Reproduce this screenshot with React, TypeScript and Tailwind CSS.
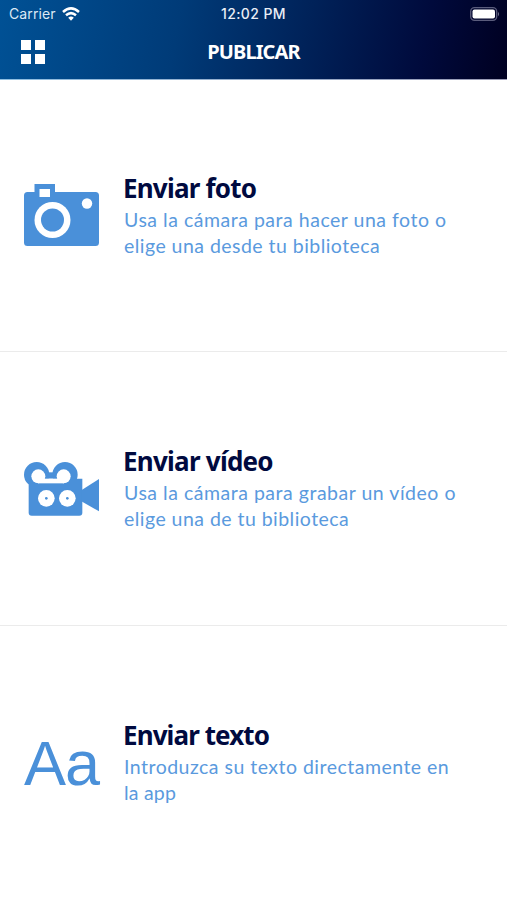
import React from "react";

function CameraIcon() {
  return (
    <svg width="75" height="62" viewBox="0 0 75 62" fill="#4a90d9">
      <path d="M10.5 8V0H31V8H71.500Q75 8 75 11.500V58.500Q75 62 71.500 62H3.500Q0 62 0 58.500V11.500Q0 8 3.500 8Z" />
      <rect x="15.500" y="5" width="10.500" height="8" fill="white" />
      <circle cx="28.500" cy="36" r="18" fill="white" />
      <circle cx="28.500" cy="36" r="11.500" />
      <circle cx="63" cy="19.500" r="5.200" fill="white" />
    </svg>
  );
}

function VideoIcon() {
  return (
    <svg width="75" height="54" viewBox="42 35 225 162" fill="#4a90d9">
      <circle cx="80" cy="73" r="38" />
      <circle cx="165" cy="73" r="38" />
      <path d="M56 85H217V187Q217 196 208 196H65Q56 196 56 187Z" />
      <path d="M214 120L267 86V183L214 153Z" />
      <path d="M105 66H140V85H105Z" />
      <g fill="white">
        <circle cx="85" cy="78" r="21" />
        <circle cx="161" cy="78" r="21" />
        <rect x="84" y="85" width="78" height="14" />
        <circle cx="109" cy="144" r="25" />
        <circle cx="172" cy="144" r="25" />
      </g>
      <circle cx="109" cy="144" r="4" />
      <circle cx="172" cy="144" r="4" />
    </svg>
  );
}

function TextIcon() {
  return (
    <span className="block font-['Liberation_Sans',sans-serif] text-[63px] leading-[64px] tracking-[-1px] text-[#4a90d9]">
      Aa
    </span>
  );
}

const OPTIONS = [
  {
    icon: <CameraIcon />,
    title: "Enviar foto",
    height: "h-[273px]",
    titleClass: "tracking-[-0.8px]",
    lines: [
      { text: "Usa la cámara para hacer una foto o", className: "tracking-[0.520px]" },
      { text: "elige una desde tu biblioteca", className: "tracking-[0.460px]" },
    ],
  },
  {
    icon: <VideoIcon />,
    title: "Enviar vídeo",
    height: "h-[274px]",
    titleClass: "tracking-[-0.750px]",
    lines: [
      { text: "Usa la cámara para grabar un vídeo o", className: "tracking-[0.520px]" },
      { text: "elige una de tu biblioteca", className: "tracking-[0.460px]" },
    ],
  },
  {
    icon: <TextIcon />,
    title: "Enviar texto",
    height: "h-[273px]",
    titleClass: "tracking-[-0.9px]",
    lines: [
      { text: "Introduzca su texto directamente en", className: "tracking-[0.480px]" },
      { text: "la app", className: "tracking-[0.2px]" },
    ],
  },
];

function StatusBar() {
  return (
    <div className="grid h-[27px] grid-cols-3 items-center pr-[7px] pl-[9px] font-[Inter,sans-serif] text-[14px]">
      <div className="flex items-center gap-[6px]">
        <span className="tracking-[0.1px] text-[#dce9f5]">Carrier</span>
        <svg width="18" height="14" viewBox="0 0 18 14" fill="none" stroke="white" strokeWidth="2.500">
          <path d="M1 5Q9 -2.200 17 5" />
          <path d="M4 8.300Q9 4 14 8.300" />
          <path d="M6.200 10.700Q9 8.300 11.800 10.700L9 13.800Z" fill="white" stroke="none" />
        </svg>
      </div>
      <span className="-ml-0.5 text-center font-medium tracking-[0.4px] whitespace-nowrap text-[#e9eef6]">
        12:02 PM
      </span>
      <svg className="justify-self-end" width="30" height="14" viewBox="0 0 30 14">
        <rect x="0.700" y="0.700" width="26" height="12.600" rx="3.800" fill="none" stroke="#5a5c7c" strokeWidth="1.300" />
        <rect x="2.500" y="2.500" width="22.500" height="9" rx="2" fill="white" />
        <path d="M28 4.700Q30 7 28 9.300Z" fill="#74758f" />
      </svg>
    </div>
  );
}

export default function App() {
  return (
    <div className="flex h-[900px] w-[507px] flex-col overflow-hidden bg-white">
      <header className="h-[79px] shrink-0 bg-[linear-gradient(100deg,#005195_0%,#003b78_35%,#002259_60%,#000a3c_83%,#000021_100%)] text-white">
        <StatusBar />
        <div className="grid h-[50px] grid-cols-3 items-center px-[21px]">
          <div className="grid w-6 grid-cols-2 gap-1">
            <span className="size-[10px] bg-white" />
            <span className="size-[10px] bg-white" />
            <span className="size-[10px] bg-white" />
            <span className="size-[10px] bg-white" />
          </div>
          <h1 className="text-center font-['Noto_Sans',sans-serif] text-[20px] font-bold tracking-[-0.9px]">
            PUBLICAR
          </h1>
        </div>
      </header>
      <div className="-mb-px h-px shrink-0 bg-linear-to-r from-[#8fbfe2] to-[#9a9ab4]" />
      <main className="flex flex-col">
        {OPTIONS.map((option) => (
          <section
            key={option.title}
            className={`flex shrink-0 items-center border-b border-[#ebebeb] pl-6 last:border-b-0 ${option.height}`}
          >
            <div className="w-[99px] shrink-0">{option.icon}</div>
            <div className="font-['Noto_Sans',sans-serif] whitespace-nowrap">
              <h2 className={`text-[26px] leading-[32px] font-bold text-[#000a3f] ${option.titleClass}`}>
                {option.title}
              </h2>
              <p className="mt-[3px] pl-px font-[Lato,sans-serif] text-[19.500px] leading-[26px] text-[#5a9ade]">
                {option.lines.map((line) => (
                  <span key={line.text} className={`block ${line.className}`}>
                    {line.text}
                  </span>
                ))}
              </p>
            </div>
          </section>
        ))}
      </main>
    </div>
  );
}
